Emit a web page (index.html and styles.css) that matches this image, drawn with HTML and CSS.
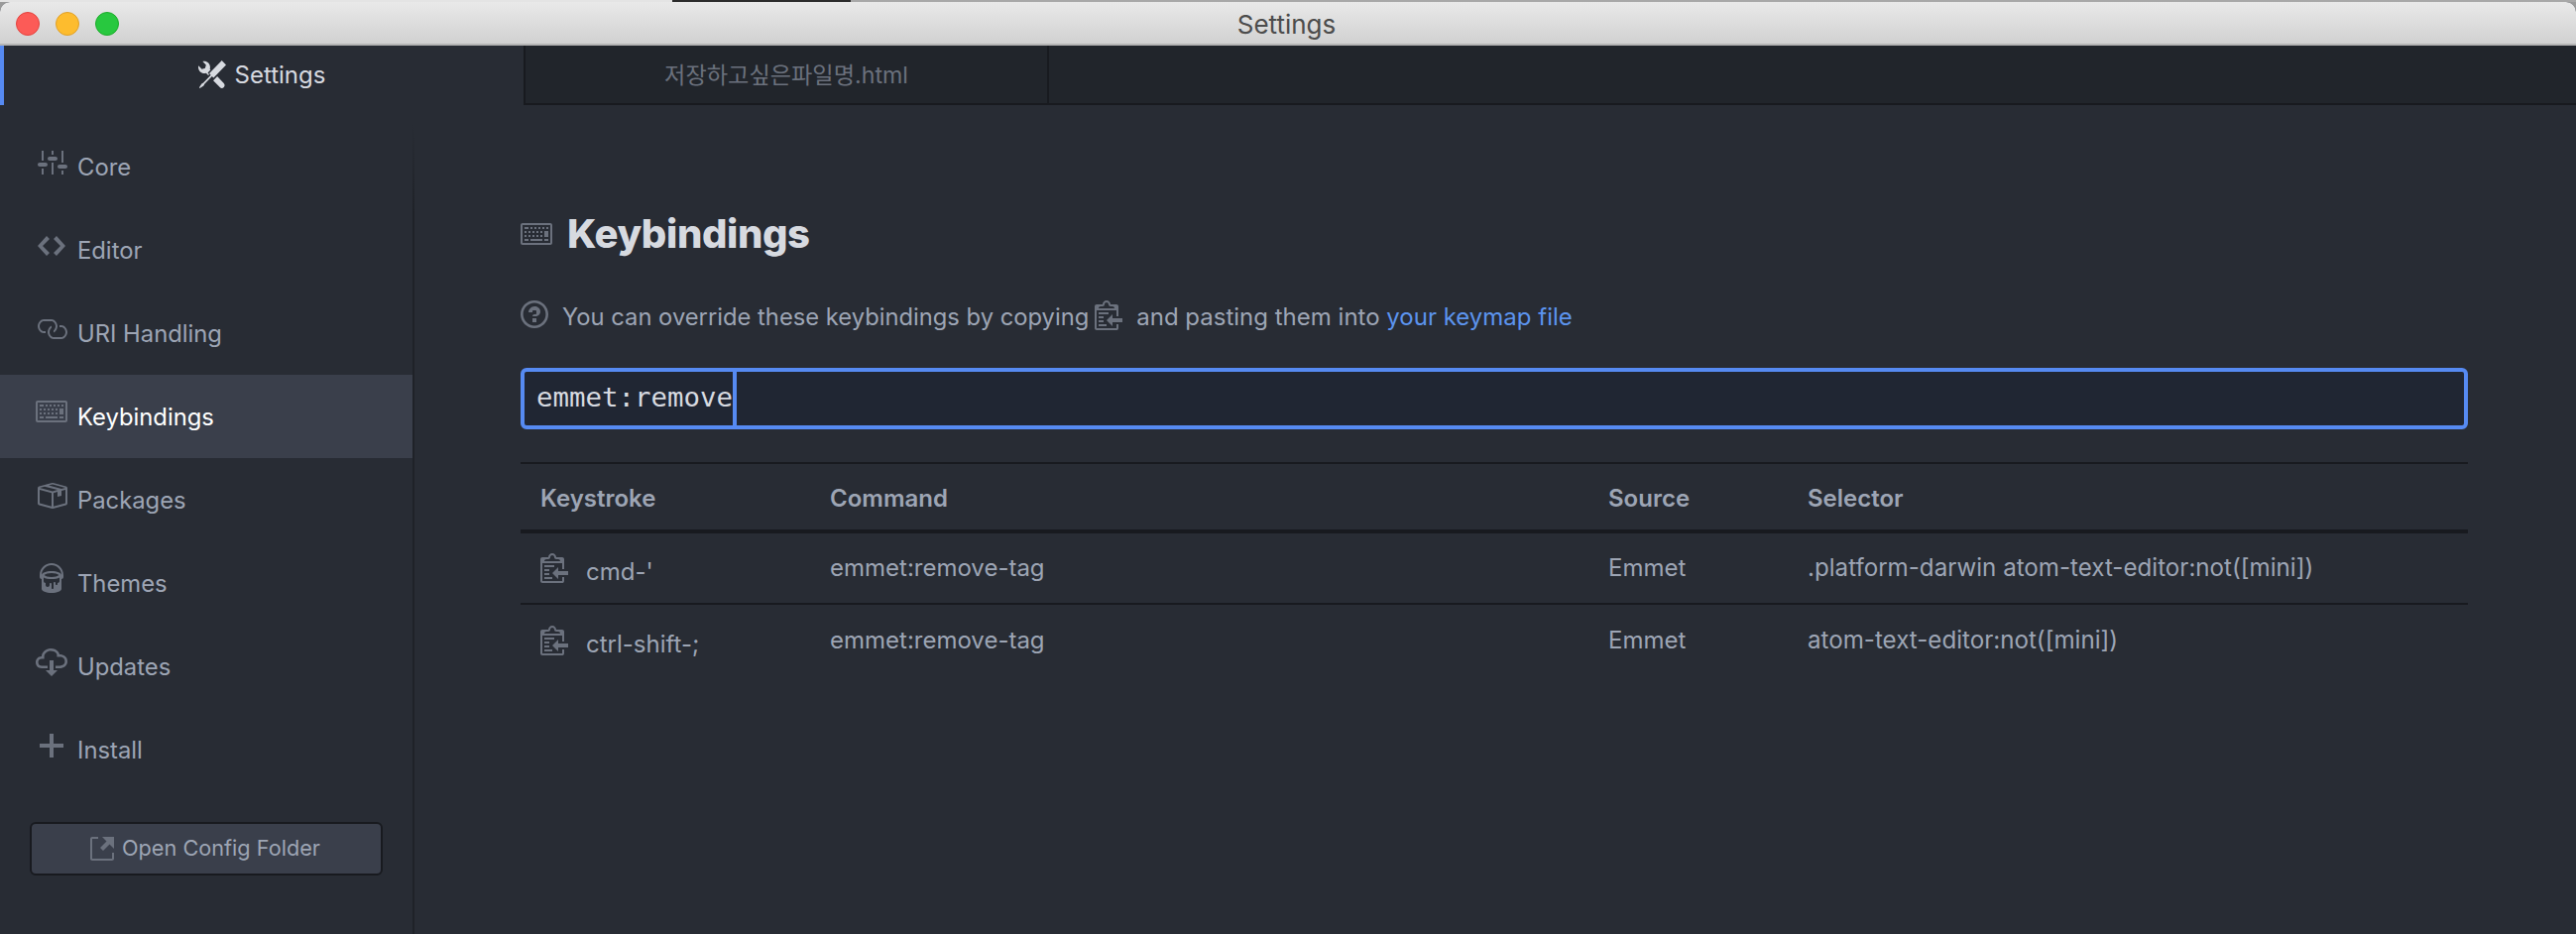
FILE: index.html
```html
<!DOCTYPE html>
<html lang="en">
<head>
<meta charset="utf-8">
<title>Settings</title>
<link rel="stylesheet" href="styles.css">
</head>
<body>
<div class="desktop-strip"><i class="seg-light"></i><i class="seg-dark"></i><i class="seg-grey"></i></div>
<div class="window">
  <header class="titlebar">
    <div class="lights"><i class="light red"></i><i class="light yellow"></i><i class="light green"></i></div>
    <div class="window-title">Settings</div>
  </header>
  <nav class="tabs">
    <div class="tab active">
      <svg class="tab-icon" viewBox="0 0 16 16"><path d="M4.48 7.27c.26.26 1.28 1.33 1.28 1.33l.56-.58-.88-.91 1.69-1.8s-.76-.74-.43-.45c.32-1.19.03-2.51-.87-3.44C4.93.5 3.66.2 2.52.51l1.93 2-.51 1.96-1.89.52-1.93-2C-.19 4.17.1 5.48 1 6.4c.94.98 2.29 1.26 3.48.87zm6.44 1.94l-2.33 2.3 3.84 3.98c.31.33.73.49 1.14.49.41 0 .82-.16 1.14-.49.63-.65.63-1.7 0-2.35l-3.79-3.93zM16 2.53L13.55 0 6.33 7.46l.88.91-4.31 4.46-.99.53-1.39 2.27.35.37 2.2-1.44.51-1.02L7.9 9.08l.88.91L16 2.53z"/></svg>
      <span class="tab-label">Settings</span>
    </div>
    <div class="tab"><span class="tab-label file-label">저장하고싶은파일명.html</span></div>
    <div class="tab-rest"></div>
  </nav>
  <div class="main">
    <aside class="sidebar">
      <ul class="menu">
        <li class="item"><span class="ico"><svg class="w16" viewBox="0 0 16 16"><path d="M4 7H3V2h1v5zm-1 7h1v-3H3v3zm5 0h1V8H8v6zm5 0h1v-2h-1v2zm1-12h-1v6h1V2zM9 2H8v2h1V2zM5 8H2c-.55 0-1 .45-1 1s.45 1 1 1h3c.55 0 1-.45 1-1s-.45-1-1-1zm5-3H7c-.55 0-1 .45-1 1s.45 1 1 1h3c.55 0 1-.45 1-1s-.45-1-1-1zm5 4h-3c-.55 0-1 .45-1 1s.45 1 1 1h3c.55 0 1-.45 1-1s-.45-1-1-1z"/></svg></span>Core</li>
        <li class="item"><span class="ico"><svg class="w14" viewBox="0 0 14 16"><path d="M9.5 3L8 4.5 11.5 8 8 11.5 9.5 13 14 8 9.5 3zm-5 0L0 8l4.5 5L6 11.5 2.5 8 6 4.5 4.5 3z"/></svg></span>Editor</li>
        <li class="item"><span class="ico"><svg class="w16" viewBox="0 0 16 16"><path d="M4 9h1v1H4c-1.5 0-3-1.69-3-3.5S2.55 3 4 3h4c1.45 0 3 1.69 3 3.5 0 1.41-.91 2.72-2 3.25V8.59c.58-.45 1-1.27 1-2.09C10 5.22 8.98 4 8 4H4c-.98 0-2 1.22-2 2.5S3 9 4 9zm9-3h-1v1h1c1 0 2 1.22 2 2.5S13.98 12 13 12H9c-.98 0-2-1.22-2-2.5 0-.83.42-1.64 1-2.09V6.25c-1.09.53-2 1.84-2 3.25C6 11.31 7.55 13 9 13h4c1.45 0 3-1.69 3-3.5S14.5 6 13 6z"/></svg></span>URI Handling</li>
        <li class="item selected"><span class="ico"><svg class="w16" viewBox="0 0 16 16"><path d="M10 5H9V4h1v1zM3 6H2v1h1V6zm5-2H7v1h1V4zM4 4H2v1h2V4zm8 7h2v-1h-2v1zM8 7h1V6H8v1zm-4 3H2v1h2v-1zm8-6h-1v1h1V4zm2 0h-1v1h1V4zm-2 5h2V6h-2v3zm4-6v9c0 .55-.45 1-1 1H1c-.55 0-1-.45-1-1V3c0-.55.45-1 1-1h14c.55 0 1 .45 1 1zm-1 0H1v9h14V3zM6 7h1V6H6v1zm0-3H5v1h1V4zM4 7h1V6H4v1zm1 4h6v-1H5v1zm5-4h1V6h-1v1zM3 8H2v1h1V8zm5 0v1h1V8H8zM6 8v1h1V8H6zM5 8H4v1h1V8zm5 1h1V8h-1v1z"/></svg></span>Keybindings</li>
        <li class="item"><span class="ico"><svg class="w16" viewBox="0 0 16 16"><path d="M1 4.27v7.47c0 .45.3.84.75.97l6.5 1.73c.16.05.34.05.5 0l6.5-1.73c.45-.13.75-.52.75-.97V4.27c0-.45-.3-.84-.75-.97l-6.5-1.74a1.4 1.4 0 0 0-.5 0L1.75 3.3c-.45.13-.75.52-.75.97zm7 9.09l-6-1.59V5l6 1.61v6.75zM2 4l2.5-.67L11 5.06l-2.5.67L2 4zm13 7.77l-6 1.59V6.61l2-.55V8.5l2-.53V5.53L15 5v6.77zm-2-7.24L6.5 2.8l2-.53L15 4l-2 .53z"/></svg></span>Packages</li>
        <li class="item"><span class="ico"><svg class="w12" viewBox="0 0 12 16"><path d="M6 0C2.69 0 0 2.69 0 6v1c0 .55.45 1 1 1v5c0 1.1 2.24 2 5 2s5-.9 5-2V8c.55 0 1-.45 1-1V6c0-3.31-2.69-6-6-6zm3 10v.5c0 .28-.22.5-.5.5s-.5-.22-.5-.5V10c0-.28-.22-.5-.5-.5s-.5.22-.5.5v2.5c0 .28-.22.5-.5.5s-.5-.22-.5-.5v-2c0-.28-.22-.5-.5-.5s-.5.22-.5.5v.5c0 .55-.45 1-1 1s-1-.45-1-1v-1c-.55 0-1-.45-1-1V7.2c.91.49 2.36.8 4 .8 1.64 0 3.09-.31 4-.8V9c0 .55-.45 1-1 1zM6 7c-1.68 0-3.12-.41-3.71-1C2.88 5.41 4.32 5 6 5c1.68 0 3.12.41 3.71 1-.59.59-2.03 1-3.71 1zm0-3c-2.76 0-5 .89-5 2 0-2.75 2.25-5 5-5s5 2.25 5 5c0-1.11-2.24-2-5-2z"/></svg></span>Themes</li>
        <li class="item"><span class="ico"><svg class="w16" viewBox="0 0 16 16"><path d="M9 12h2l-3 3-3-3h2V7h2v5zm3-8c0-.44-.91-3-4.5-3C5.08 1 3 2.92 3 5 1.02 5 0 6.52 0 8c0 1.53 1 3 3 3h3V9.7H3C1.38 9.7 1.3 8.28 1.3 8c0-.17.05-1.7 1.7-1.7h1.3V5c0-1.39 1.56-2.7 3.2-2.7 2.55 0 3.13 1.55 3.2 1.8v1.2H12c.81 0 2.7.22 2.7 2.2 0 2.09-2.25 2.2-2.7 2.2h-2V11h2c2.08 0 4-1.16 4-3.5C16 5.06 14.08 4 12 4z"/></svg></span>Updates</li>
        <li class="item"><span class="ico"><svg class="w12" viewBox="0 0 12 16"><path d="M12 9H7v5H5V9H0V7h5V2h2v5h5v2z"/></svg></span>Install</li>
      </ul>
      <div class="config-button">
        <svg class="w12 btn-icon" viewBox="0 0 12 16"><path d="M11 10h1v3c0 .55-.45 1-1 1H1c-.55 0-1-.45-1-1V3c0-.55.45-1 1-1h3v1H1v10h10v-3zM6 2l2.25 2.25L5 7.5 6.5 9l3.25-3.25L12 8V2H6z"/></svg>
        <span>Open Config Folder</span>
      </div>
    </aside>
    <section class="content">
      <h1 class="heading"><svg class="w16 heading-icon" viewBox="0 0 16 16"><path d="M10 5H9V4h1v1zM3 6H2v1h1V6zm5-2H7v1h1V4zM4 4H2v1h2V4zm8 7h2v-1h-2v1zM8 7h1V6H8v1zm-4 3H2v1h2v-1zm8-6h-1v1h1V4zm2 0h-1v1h1V4zm-2 5h2V6h-2v3zm4-6v9c0 .55-.45 1-1 1H1c-.55 0-1-.45-1-1V3c0-.55.45-1 1-1h14c.55 0 1 .45 1 1zm-1 0H1v9h14V3zM6 7h1V6H6v1zm0-3H5v1h1V4zM4 7h1V6H4v1zm1 4h6v-1H5v1zm5-4h1V6h-1v1zM3 8H2v1h1V8zm5 0v1h1V8H8zM6 8v1h1V8H6zM5 8H4v1h1V8zm5 1h1V8h-1v1z"/></svg>Keybindings</h1>
      <p class="hint">
        <svg class="w14 hint-help" viewBox="0 0 14 16"><path d="M6 10h2v2H6v-2zm4-3.5C10 8.64 8 9 8 9H6c0-.55.45-1 1-1h.5c.28 0 .5-.22.5-.5v-1c0-.28-.22-.5-.5-.5h-1c-.28 0-.5.22-.5.5V7H4c0-1.5 1.5-3 3-3s3 1 3 2.5zM7 2.3c3.14 0 5.7 2.56 5.7 5.7s-2.56 5.7-5.7 5.7A5.71 5.71 0 0 1 1.3 8c0-3.14 2.56-5.7 5.7-5.7zM7 1C3.14 1 0 4.14 0 8s3.14 7 7 7 7-3.14 7-7-3.14-7-7-7z"/></svg>
        <span>You can override these keybindings by copying</span>
        <svg class="w14 hint-clip" viewBox="0 0 14 16"><path d="M2 13h4v1H2v-1zm5-6H2v1h5V7zm2 3V8l-3 3 3 3v-2h5v-2H9zM4.5 9H2v1h2.5V9zM2 12h2.5v-1H2v1zm9 1h1v2c-.02.28-.11.52-.3.7-.19.18-.42.28-.7.3H1c-.55 0-1-.45-1-1V4c0-.55.45-1 1-1h3c0-1.11.89-2 2-2 1.11 0 2 .89 2 2h3c.55 0 1 .45 1 1v5h-1V6H1v9h10v-2zM2 5h8c0-.55-.45-1-1-1H8c-.55 0-1-.45-1-1s-.45-1-1-1-1 .45-1 1-.45 1-1 1H3c-.55 0-1 .45-1 1z"/></svg>
        <span class="hint-rest">and pasting them into&nbsp;<a class="link">your keymap file</a></span>
      </p>
      <div class="filter"><span class="filter-text">emmet:remove</span><span class="caret"></span></div>
      <table class="bindings">
        <colgroup><col class="c1"><col class="c2"><col class="c3"><col class="c4"></colgroup>
        <thead><tr><th>Keystroke</th><th>Command</th><th>Source</th><th>Selector</th></tr></thead>
        <tbody>
          <tr>
            <td><div class="keystroke"><svg class="w14" viewBox="0 0 14 16"><path d="M2 13h4v1H2v-1zm5-6H2v1h5V7zm2 3V8l-3 3 3 3v-2h5v-2H9zM4.5 9H2v1h2.5V9zM2 12h2.5v-1H2v1zm9 1h1v2c-.02.28-.11.52-.3.7-.19.18-.42.28-.7.3H1c-.55 0-1-.45-1-1V4c0-.55.45-1 1-1h3c0-1.11.89-2 2-2 1.11 0 2 .89 2 2h3c.55 0 1 .45 1 1v5h-1V6H1v9h10v-2zM2 5h8c0-.55-.45-1-1-1H8c-.55 0-1-.45-1-1s-.45-1-1-1-1 .45-1 1-.45 1-1 1H3c-.55 0-1 .45-1 1z"/></svg><span class="keys">cmd-'</span></div></td>
            <td>emmet:remove-tag</td><td>Emmet</td><td class="selector">.platform-darwin atom-text-editor:not([mini])</td>
          </tr>
          <tr>
            <td><div class="keystroke"><svg class="w14" viewBox="0 0 14 16"><path d="M2 13h4v1H2v-1zm5-6H2v1h5V7zm2 3V8l-3 3 3 3v-2h5v-2H9zM4.5 9H2v1h2.5V9zM2 12h2.5v-1H2v1zm9 1h1v2c-.02.28-.11.52-.3.7-.19.18-.42.28-.7.3H1c-.55 0-1-.45-1-1V4c0-.55.45-1 1-1h3c0-1.11.89-2 2-2 1.11 0 2 .89 2 2h3c.55 0 1 .45 1 1v5h-1V6H1v9h10v-2zM2 5h8c0-.55-.45-1-1-1H8c-.55 0-1-.45-1-1s-.45-1-1-1-1 .45-1 1-.45 1-1 1H3c-.55 0-1 .45-1 1z"/></svg><span class="keys">ctrl-shift-;</span></div></td>
            <td>emmet:remove-tag</td><td>Emmet</td><td class="selector">atom-text-editor:not([mini])</td>
          </tr>
        </tbody>
      </table>
    </section>
  </div>
</div>
</body>
</html>
```
FILE: styles.css
```css
* { box-sizing: border-box; }
html, body { margin: 0; padding: 0; height: 942px; overflow: hidden; }
body {
  width: 2598px;
  background: #9a9a9a;
  font-family: Inter, "Noto Sans CJK KR", sans-serif;
  font-size: 24px;
  color: #9da5b4;
}
.desktop-strip { display: flex; height: 2px; }
.desktop-strip i { display: block; height: 2px; }
.seg-light { width: 678px; background: #e4e4e4; }
.seg-dark { width: 180px; background: #2b2b2b; }
.seg-grey { flex: 1; background: #a8a8a8; }

.window {
  height: 940px;
  display: flex;
  flex-direction: column;
  border-radius: 10px 10px 0 0;
  overflow: hidden;
  background: #282c34;
}
.titlebar {
  height: 44px;
  flex: none;
  display: flex;
  align-items: center;
  background: linear-gradient(#e9e9e9, #d1d1d1);
  border-bottom: 2px solid #b4b4b4;
}
.lights { display: flex; gap: 16px; padding-left: 16px; margin-top: 1px; }
.light { display: block; width: 24px; height: 24px; border-radius: 50%; }
.red { background: #fc5b57; border: 1px solid #e3433e; }
.yellow { background: #fdbc2e; border: 1px solid #e0a028; }
.green { background: #28c83f; border: 1px solid #1dac2b; }
.window-title {
  flex: 1;
  text-align: center;
  color: #4c4c4c;
  font-size: 26px;
  margin-left: -123px;
  margin-top: 2px;
}

.tabs {
  height: 60px;
  flex: none;
  display: flex;
  background: #21252b;
}
.tab {
  width: 530px;
  display: flex;
  align-items: center;
  justify-content: center;
  color: #6b717d;
  border-left: 2px solid #181a1f;
  border-right: 2px solid #181a1f;
  border-bottom: 2px solid #181a1f;
  flex: none;
}
.tab.active {
  width: 528px;
  color: #d7dae0;
  background: #282c34;
  border-left: 4px solid #568af2;
  border-right: 0;
  border-bottom: 0;
  gap: 9px;
  padding-right: 4px;
}
.tab-icon { width: 28px; height: 28px; fill: #d7dae0; margin-top: -2px; }
.tab-label { margin-top: -2px; }
.file-label { font-size: 23.2px; }
.tab-rest { flex: 1; border-bottom: 2px solid #181a1f; }

svg { fill: #6b717d; flex: none; display: block; }
.w16 { width: 32px; height: 32px; }
.w14 { width: 28px; height: 32px; }
.w12 { width: 24px; height: 32px; }

.main { flex: 1; display: flex; min-height: 0; }
.sidebar {
  width: 418px;
  flex: none;
  padding-top: 20px;
  border-right: 2px solid;
  border-image: linear-gradient(#282c34 20px, #1f2228 110px) 1;
}
.menu { list-style: none; margin: 0; padding: 0; }
.item {
  height: 84px;
  display: flex;
  align-items: center;
  padding-left: 36px;
  gap: 10px;
  font-size: 23.8px;
}
.ico { width: 32px; height: 32px; display: flex; justify-content: center; margin-top: -8px; }
.selected { background: #3a3f4b; color: #fff; }

.config-button {
  margin: 31px 30px 0;
  height: 54px;
  display: flex;
  align-items: center;
  justify-content: center;
  gap: 8px;
  padding-right: 2px;
  background: #3a3f4b;
  border: 2px solid #181a1f;
  border-radius: 6px;
  font-size: 21.7px;
}
.config-button span { margin-top: -3px; }

.content { flex: 1; padding: 101px 109px 0 107px; min-width: 0; }
.heading {
  margin: 0;
  display: flex;
  align-items: center;
  gap: 15px;
  height: 56px;
  font-size: 40px;
  font-weight: 800;
  letter-spacing: -0.4px;
  color: #d7dae0;
}
.heading-icon { margin-top: 4px; }
.hint {
  margin: 39px 0 0;
  height: 36px;
  display: flex;
  align-items: center;
  line-height: 36px;
  font-size: 23.75px;
}
.hint-help { margin-right: 14px; margin-top: -6px; }
.hint-clip { margin: -6px 14px 0 6px; }
.hint-rest { font-size: 24px; }
.link { color: #5c94ee; }

.filter {
  margin-top: 33px;
  height: 62px;
  display: flex;
  align-items: stretch;
  padding-left: 12px;
  border: 4px solid #568af2;
  border-radius: 6px;
  background: #202633;
  color: #d7dae0;
  font-family: "DejaVu Sans Mono", monospace;
  font-size: 27.4px;
}
.filter-text { line-height: 54px; margin-top: -1px; }
.caret { width: 4px; background: #568af2; }

.bindings {
  margin-top: 33px;
  width: 100%;
  table-layout: fixed;
  border-collapse: separate;
  border-spacing: 0;
}
.c1 { width: 292px; }
.c2 { width: 785px; }
.c3 { width: 201px; }
th {
  height: 72px;
  padding: 2px 0 0 20px;
  text-align: left;
  font-weight: 600;
  border-top: 2px solid #181a1f;
  border-bottom: 4px solid #181a1f;
}
td {
  height: 72px;
  padding: 0 0 2px 20px;
  border-bottom: 2px solid #181a1f;
  white-space: nowrap;
}
td.selector { font-size: 24.15px; }
tbody tr:last-child td { border-bottom: 0; }
.keystroke { display: flex; align-items: center; gap: 18px; }
.keys { margin-top: 8px; }
```
